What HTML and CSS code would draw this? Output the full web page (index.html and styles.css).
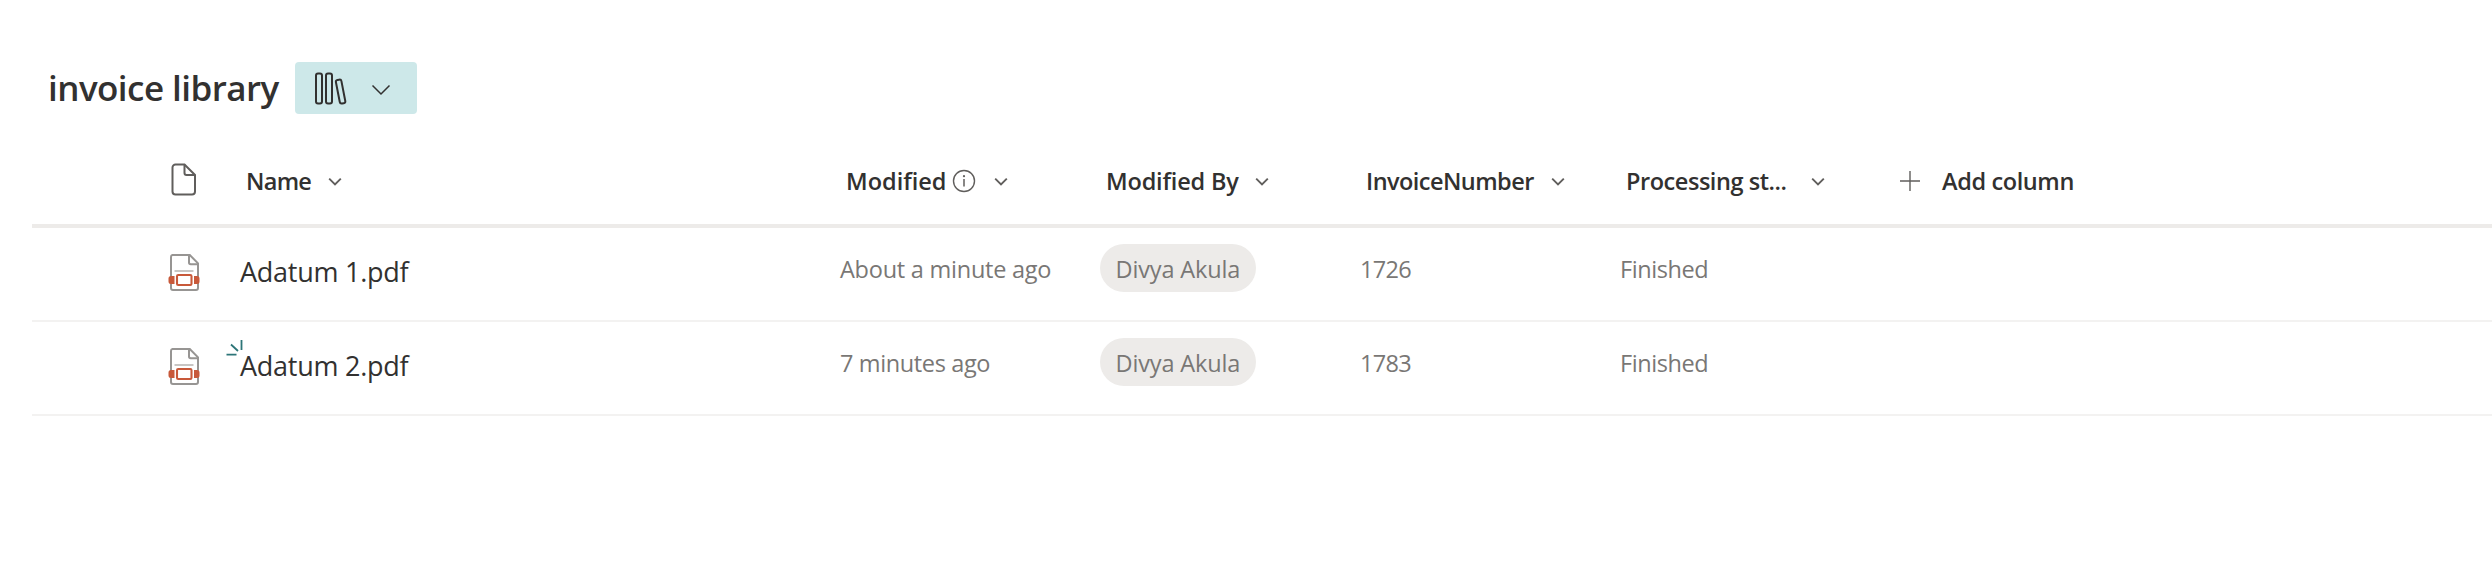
FILE: index.html
```html
<!DOCTYPE html>
<html lang="en">
<head>
<meta charset="utf-8">
<title>invoice library</title>
<link rel="stylesheet" href="styles.css">
</head>
<body>
<svg class="defs" aria-hidden="true">
  <symbol id="chevron" viewBox="0 0 14 10"><path d="M1.2 1.6 7 7.4l5.800-5.800" fill="none" stroke="#605e5c" stroke-width="1.900"/></symbol>
  <symbol id="pdf" viewBox="0 0 32 38">
    <path d="M4.500 1h17.300l8.200 8.300V34a2 2 0 0 1-2 2H5a2 2 0 0 1-2-2V3a2 2 0 0 1 1.500-2Z" fill="#fff" stroke="#979593" stroke-width="2"/>
    <path d="M21 1v7.500a1.800 1.800 0 0 0 1.800 1.800H30" fill="none" stroke="#979593" stroke-width="2"/>
    <path d="M6.500 17h19" stroke="#c8c6c4" stroke-width="2"/>
    <rect x="5" y="19" width="22" height="15" fill="#fff"/>
    <path d="M3 22h3.500v8H3a2.500 2.500 0 0 1-2.500-2.500v-3A2.500 2.500 0 0 1 3 22ZM29 22h-3v8h3a2.500 2.500 0 0 0 2.500-2.500v-3A2.500 2.500 0 0 0 29 22Z" fill="#c8593a"/>
    <rect x="9" y="21" width="14.500" height="10" rx="1.200" fill="#fff" stroke="#c8593a" stroke-width="2.100"/>
  </symbol>
</svg>
<header class="library-header">
  <h1 class="library-title">invoice library</h1>
  <button class="view-button" aria-label="Library type">
    <svg class="books" viewBox="0 0 34 34" fill="none" stroke="#323130" stroke-width="2">
      <rect x="2" y="1.500" width="6" height="30" rx="2"/>
      <rect x="12" y="1.500" width="6" height="30" rx="2"/>
      <rect x="23.800" y="7.600" width="5.600" height="24" rx="1.900" transform="rotate(-11 26.600 19.600)"/>
    </svg>
    <svg class="view-chevron" viewBox="0 0 20 12"><path d="M1.500 1.500 10 10l8.500-8.500" fill="none" stroke="#323130" stroke-width="1.500"/></svg>
  </button>
</header>
<main class="list">
  <div class="row head">
    <div class="icon-cell">
      <svg class="file-icon" viewBox="0 0 26 34" fill="none" stroke="#605e5c" stroke-width="2"><path d="M4.500 1.500h9L24 12v16.500a3 3 0 0 1-3 3H4.500a3 3 0 0 1-3-3v-24a3 3 0 0 1 3-3Z"/><path d="M13.500 1.500V10a2 2 0 0 0 2 2H24"/></svg>
    </div>
    <div class="cell"><span class="label name">Name</span><svg class="chevron"><use href="#chevron"/></svg></div>
    <div class="cell"><span class="label modified">Modified</span><svg class="info" viewBox="0 0 24 24"><circle cx="12" cy="12" r="10.500" fill="none" stroke="#605e5c" stroke-width="1.400"/><path d="M12 10v7.500" stroke="#605e5c" stroke-width="1.500"/><circle cx="12" cy="7.200" r="1.100" fill="#605e5c"/></svg><svg class="chevron"><use href="#chevron"/></svg></div>
    <div class="cell"><span class="label modified-by">Modified By</span><svg class="chevron"><use href="#chevron"/></svg></div>
    <div class="cell"><span class="label number">InvoiceNumber</span><svg class="chevron"><use href="#chevron"/></svg></div>
    <div class="cell"><span class="label status">Processing st...</span><svg class="chevron"><use href="#chevron"/></svg></div>
    <div class="cell add"><svg class="plus" viewBox="0 0 20 20"><path d="M10 0v20M0 10h20" stroke="#605e5c" stroke-width="1.400"/></svg><span class="add-label">Add column</span></div>
  </div>
  <div class="row item">
    <div class="icon-cell"><svg class="pdf-icon"><use href="#pdf"/></svg></div>
    <div class="cell"><span class="file-name">Adatum 1.pdf</span></div>
    <div class="cell"><span class="meta about">About a minute ago</span></div>
    <div class="cell"><span class="person">Divya Akula</span></div>
    <div class="cell"><span class="meta digits">1726</span></div>
    <div class="cell"><span class="meta finished">Finished</span></div>
  </div>
  <div class="row item">
    <div class="icon-cell"><svg class="pdf-icon"><use href="#pdf"/></svg></div>
    <div class="cell"><span class="file-name">Adatum 2.pdf<svg class="new-mark" viewBox="0 0 18 18" fill="none" stroke="#2d7578" stroke-width="1.800"><path d="M15.500 1v10M5 5.500l7 6.500M.5 15.600h10"/></svg></span></div>
    <div class="cell"><span class="meta minutes">7 minutes ago</span></div>
    <div class="cell"><span class="person">Divya Akula</span></div>
    <div class="cell"><span class="meta digits">1783</span></div>
    <div class="cell"><span class="meta finished">Finished</span></div>
  </div>
</main>
</body>
</html>
```

FILE: styles.css
```css
* { box-sizing: border-box; }
body {
  margin: 0;
  background: #fff;
  color: #323130;
  font-family: "Open Sans", "Noto Sans", sans-serif;
  overflow: hidden;
}
.defs { display: none; }
svg { flex: none; }
.library-header { display: flex; align-items: flex-start; height: 138px; padding: 62px 0 0 48px; }
.library-title {
  margin: 0;
  padding-top: 2px;
  width: 247px;
  font-size: 35px;
  line-height: 48px;
  font-weight: 600;
  letter-spacing: -0.55px;
  white-space: nowrap;
}
.view-button {
  display: flex;
  align-items: center;
  width: 122px;
  height: 52px;
  padding: 0 0 0 19px;
  border: 0;
  border-radius: 4px;
  background: #cde8e9;
}
.books { width: 34px; height: 34px; margin-top: 1px; }
.view-chevron { width: 20px; height: 12px; margin: 3px 0 0 23px; }
.list { margin-left: 32px; }
.row { display: grid; grid-template-columns: 200px 600px repeat(4, 260px) 1fr; }
.head { height: 90px; border-bottom: 4px solid #edebe9; }
.item { height: 94px; border-bottom: 2px solid #f3f2f1; }
.cell { display: flex; white-space: nowrap; padding-left: 8px; }
.head .cell { align-items: center; height: 86px; padding-left: 14px; font-size: 23.5px; font-weight: 600; }
.icon-cell { padding-left: 139px; }
.file-icon { display: block; width: 26px; height: 34px; margin-top: 25px; }
.pdf-icon { display: block; width: 32px; height: 38px; margin: 26px 0 0 -3px; }
.chevron { width: 14px; height: 10px; margin-top: 2px; }
.label { flex: none; }
.name { width: 82px; letter-spacing: -0.7px; }
.modified { width: 106px; }
.modified-by { width: 149px; letter-spacing: -0.17px; }
.number { width: 185px; letter-spacing: -0.54px; }
.status { width: 185px; letter-spacing: -0.45px; }
.info { width: 24px; height: 24px; margin-right: 18px; }
.head .add { padding-left: 28px; }
.plus { width: 20px; height: 20px; }
.add-label { margin-left: 22px; letter-spacing: -0.38px; }
.file-name {
  position: relative;
  height: 40px;
  margin-top: 24px;
  font-size: 27px;
  line-height: 40px;
  letter-spacing: -0.25px;
}
.new-mark { position: absolute; left: -14px; top: -7px; width: 18px; height: 18px; }
.meta { margin-top: 21px; font-size: 23.5px; line-height: 40px; color: #797775; }
.about { letter-spacing: -0.24px; }
.minutes { letter-spacing: -0.37px; }
.digits { letter-spacing: -0.7px; }
.finished { letter-spacing: -0.43px; }
.person {
  width: 156px;
  height: 48px;
  margin-top: 16px;
  padding-left: 15.5px;
  border-radius: 24px;
  background: #edebe9;
  color: #797775;
  font-size: 23.5px;
  line-height: 50px;
  letter-spacing: -0.15px;
}
```
